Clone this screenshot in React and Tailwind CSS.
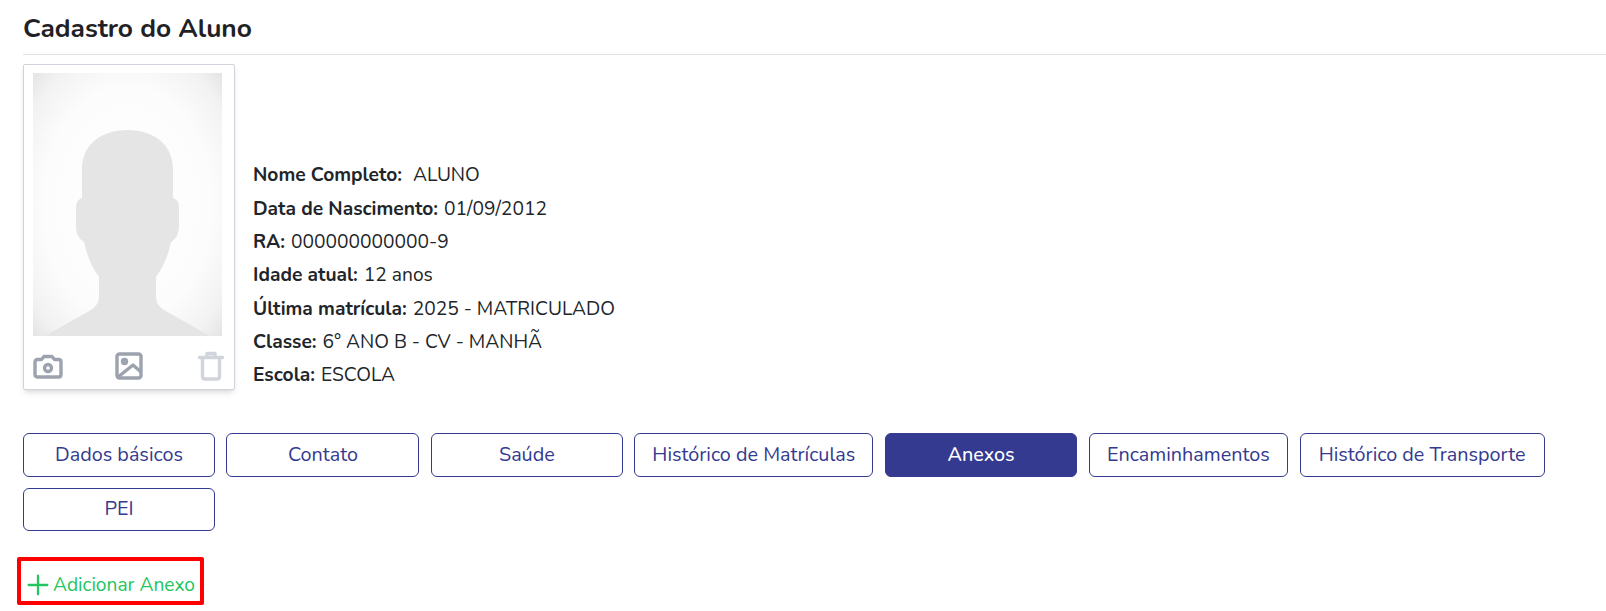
import React from "react";
import { Plus } from "lucide-react";

const Field = ({ label, children, gap = "ml-[1px]" }) => (
  <p className="h-[33.3px] leading-[33.3px] whitespace-pre">
    <span className="font-bold">{label}</span> <span className={gap}>{children}</span>
  </p>
);

const tabs = [
  ["Dados básicos", "w-[192px]"],
  ["Contato", "w-[193px]"],
  ["Saúde", "w-[192px]"],
  ["Histórico de Matrículas", "w-[239px]"],
  ["Anexos", "w-[192.5px]"],
  ["Encaminhamentos", "w-[199.5px]"],
  ["Histórico de Transporte", "w-[245px]"],
  ["PEI", "w-[192px]"],
];

const Photo = () => (
  <svg viewBox="0 0 189 263" className="block w-[189px] h-[263px]">
    <defs>
      <radialGradient id="bg" cx="50%" cy="50%" r="72%">
        <stop offset="0" stopColor="#ffffff" />
        <stop offset="0.62" stopColor="#fcfcfc" />
        <stop offset="0.85" stopColor="#f2f2f2" />
        <stop offset="1" stopColor="#e2e2e2" />
      </radialGradient>
    </defs>
    <rect width="189" height="263" fill="url(#bg)" />
    <path
      d="M49 96C49 72 68 57 94.5 57C121 57 140 72 140 96V125C145 127 146 130 146 136V153C146 161 143 166 138 169C134 187 129 195 123 204V222C123 229 125 233 131 237L177 263H12L58 237C64 233 66 229 66 222V204C60 195 55 187 51 169C46 166 43 161 43 153V136C43 130 44 127 49 125Z"
      fill="#e5e5e5"
    />
  </svg>
);

export default function App() {
  return (
    <div className="h-[611px] overflow-hidden bg-white pl-[23px] text-[#212529] font-['Nunito','Noto_Sans','Open_Sans',sans-serif] text-[19.2px]">
      <div className="h-[55px] border-b border-[#dee2e6] pt-[10px]">
        <h1 className="text-[26.3px] leading-[36px] font-bold text-[#1f2125]">Cadastro do Aluno</h1>
      </div>

      <div className="flex items-end mt-[9px]">
        <div className="w-[212px] h-[326px] border border-[#d0d3dc] rounded-[2px] shadow-md pl-[9px] pt-[8px]">
          <Photo />
          <div className="flex justify-between items-center w-[191px] mt-[15px]">
            <svg viewBox="0 0 30 26" className="w-[30px] h-[26px] text-[#9ca3af]" fill="none" stroke="currentColor" strokeWidth="3.4" strokeLinejoin="round">
              <path d="M11 3.5H19L21.5 6.5H25.5C27 6.5 28 7.5 28 9V21.5C28 23 27 24 25.5 24H4.5C3 24 2 23 2 21.5V9C2 7.5 3 6.5 4.5 6.5H8.5Z" />
              <circle cx="15" cy="15" r="3.5" />
            </svg>
            <svg viewBox="0 0 28 28" className="w-[28px] h-[28px] -ml-[3px] text-[#9ca3af]" fill="none" stroke="currentColor" strokeWidth="3.4" strokeLinejoin="round">
              <rect x="2" y="2" width="24" height="24" rx="2.5" />
              <circle cx="9.5" cy="9.5" r="2" />
              <path d="M3 25L18 13L26 20" />
            </svg>
            <svg viewBox="0 0 26 30" className="w-[26px] h-[30px] text-[#d1d5db]" fill="none" stroke="currentColor" strokeWidth="3.4" strokeLinejoin="round" strokeLinecap="round">
              <path d="M1.5 6.5H24.5M9 6V2.5H17V6M4.5 7V25.5C4.5 27 5.5 28 7 28H19C20.5 28 21.5 27 21.5 25.5V7" />
            </svg>
          </div>
        </div>

        <div className="ml-[18px] -mb-[2.4px] text-[#212529]">
          <Field label="Nome Completo:"> ALUNO</Field>
          <Field label="Data de Nascimento:">01/09/2012</Field>
          <Field label="RA:">000000000000-9</Field>
          <Field label="Idade atual:">12 anos</Field>
          <Field label="Última matrícula:">2025 - MATRICULADO</Field>
          <Field label="Classe:">6° ANO B - CV - MANHÃ</Field>
          <Field label="Escola:">ESCOLA</Field>
        </div>
      </div>

      <div className="flex flex-wrap gap-x-[11.45px] gap-y-[11px] mt-[43px] w-[1540px]">
        {tabs.map(([t, w]) => (
          <button
            key={t}
            className={`${w} h-[43.5px] rounded-[6px] border border-[#343a8f] text-[19.8px] ${
              t === "Anexos" ? "bg-[#343a8f] text-white font-medium" : "bg-white text-[#343a8f]"
            }`}
          >
            {t}
          </button>
        ))}
      </div>

      <div className="flex items-center mt-[26px] -ml-[6px] w-[187px] h-[48px] border-[4px] border-[#ff0000] rounded-[2px] pl-[1px] pt-[7px] text-[#22c55e] text-[19.2px]">
        <Plus size={32} strokeWidth={1.7} className="shrink-0" />
        <span className="-ml-[1px] pt-[2px]">Adicionar Anexo</span>
      </div>
    </div>
  );
}
